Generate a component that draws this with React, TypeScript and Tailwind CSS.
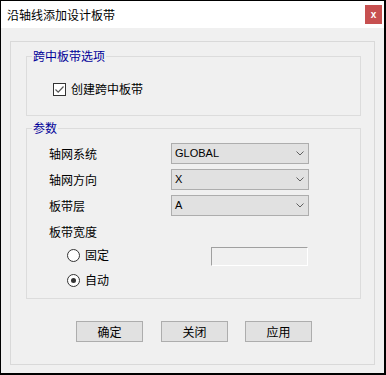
const font = { fontFamily: '"Noto Sans CJK SC", "Liberation Sans", sans-serif' };
const latin = { fontFamily: '"Liberation Sans", Arial, sans-serif' };

function Chevron() {
  return (
    <svg width="8" height="5" viewBox="0 0 8 5" fill="none">
      <path d="M0.5 0.5 L4 4 L7.5 0.5" stroke="#606060" strokeWidth="1" />
    </svg>
  );
}

function Select({ value }: { value: string }) {
  return (
    <div className="flex h-[21px] w-[138px] items-center justify-between border border-[#adadad] bg-[#e1e1e1] pl-[3px] pr-[4px]">
      <span className="text-[11px] leading-none text-black" style={latin}>
        {value}
      </span>
      <Chevron />
    </div>
  );
}

function Radio({ checked, label }: { checked?: boolean; label: string }) {
  return (
    <div className="flex h-[16px] w-[144px] items-center gap-[5px]">
      <span className="flex h-[13px] w-[13px] items-center justify-center rounded-full border border-[#333333] bg-white">
        {checked && <span className="h-[5px] w-[5px] rounded-full bg-[#333333]" />}
      </span>
      <span className="text-[12px] leading-[16px]">{label}</span>
    </div>
  );
}

export default function App() {
  const rows = [
    { label: '轴网系统', value: 'GLOBAL' },
    { label: '轴网方向', value: 'X' },
    { label: '板带层', value: 'A' },
  ];

  return (
    <div
      className="flex h-[375px] w-[386px] flex-col border-b-2 border-l border-r-2 border-t border-black bg-[#f0f0f0] text-black"
      style={font}
    >
      <div className="flex h-[27px] items-center justify-between bg-white pl-[6px] pr-[2px]">
        <span className="text-[12px] leading-none">沿轴线添加设计板带</span>
        <div className="flex h-[19px] w-[17px] items-center justify-center bg-[#c75050]">
          <span className="text-[10px] font-bold leading-none text-white" style={latin}>
            x
          </span>
        </div>
      </div>

      <div className="flex-1 px-[9px] pb-[8px] pt-[13px]">
        <div className="flex h-full flex-col border border-[#d9d9d9]">
          <div className="pl-[15px] pr-[13px] pt-[6px]">
            <fieldset className="border border-[#dcdcdc] pb-[18px] pt-[17px]">
              <legend className="ml-[5px] px-[1px] text-[12px] leading-[16px] text-[#000099]">跨中板带选项</legend>
              <div className="flex h-[16px] items-center gap-[5px] pl-[26px]">
                <span className="flex h-[13px] w-[13px] items-center justify-center border border-[#333333] bg-white">
                  <svg width="11" height="11" viewBox="0 0 11 11" fill="none">
                    <path d="M1.5 5.5 L4.2 8.2 L9.5 2.5" stroke="#555555" strokeWidth="1.2" />
                  </svg>
                </span>
                <span className="text-[12px] leading-[16px]">创建跨中板带</span>
              </div>
            </fieldset>

            <fieldset className="mt-[4px] border border-[#dcdcdc] pb-[10px] pl-[22px] pt-[7px]">
              <legend className="-ml-[17px] px-[1px] text-[12px] leading-[16px] text-[#000099]">参数</legend>
              <div className="flex flex-col gap-[5px]">
                {rows.map((row) => (
                  <div key={row.label} className="flex h-[21px] items-center">
                    <span className="w-[122px] text-[12px] leading-[16px]">{row.label}</span>
                    <Select value={row.value} />
                  </div>
                ))}
              </div>
              <div className="mt-[8px] h-[16px] text-[12px] leading-[16px]">板带宽度</div>
              <div className="mt-[7px] flex items-start pl-[18px]">
                <Radio label="固定" />
                <div className="h-[19px] w-[97px] border-b border-l border-r border-t border-b-white border-l-[#a0a0a0] border-r-white border-t-[#a0a0a0] bg-[#f0f0f0]" />
              </div>
              <div className="mt-[6px] pl-[18px]">
                <Radio checked label="自动" />
              </div>
            </fieldset>
          </div>

          <div className="mt-[22px] flex pl-[65px]">
            {['确定', '关闭', '应用'].map((t, i) => (
              <button
                key={t}
                className={`flex h-[21px] w-[67px] items-center justify-center border border-[#adadad] bg-[#e1e1e1] text-[12px] leading-none ${
                  i === 0 ? '' : i === 1 ? 'ml-[18px]' : 'ml-[17px]'
                }`}
              >
                {t}
              </button>
            ))}
          </div>
        </div>
      </div>
    </div>
  );
}
